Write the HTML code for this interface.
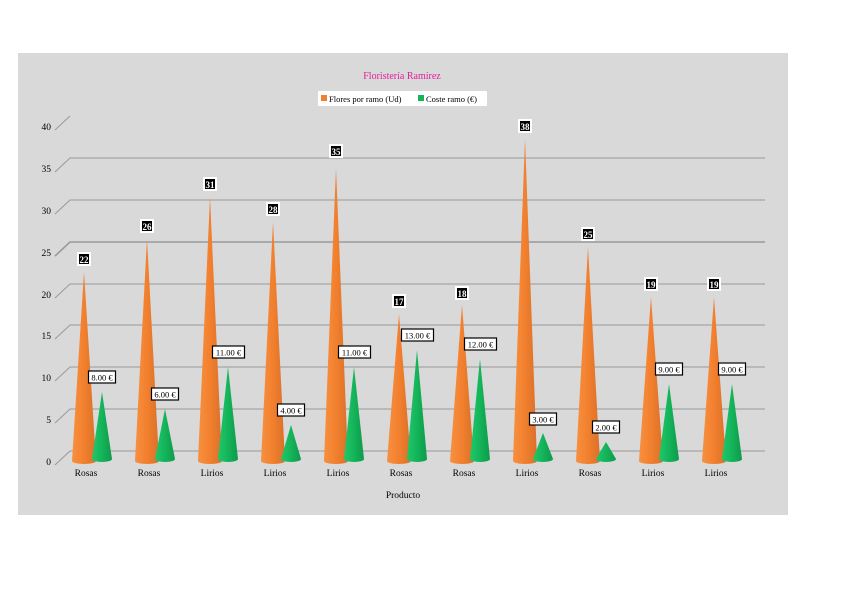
<!DOCTYPE html>
<html><head><meta charset="utf-8"><style>
html,body{margin:0;padding:0;background:#fff;width:848px;height:599px;overflow:hidden}
svg text{font-family:"Liberation Serif",serif}
</style></head><body>
<svg width="848" height="599" viewBox="0 0 848 599" xmlns="http://www.w3.org/2000/svg">
<defs>
<linearGradient id="og" x1="0" x2="1" y1="0" y2="0"><stop offset="0" stop-color="#f79040"/><stop offset="0.5" stop-color="#f2802e"/><stop offset="1" stop-color="#d8702a"/></linearGradient>
<linearGradient id="gg" x1="0" x2="1" y1="0" y2="0"><stop offset="0" stop-color="#1fc86a"/><stop offset="0.5" stop-color="#14b45a"/><stop offset="1" stop-color="#0e9a4a"/></linearGradient>
<g id="lb"></g>
</defs>
<rect x="18" y="53" width="770" height="462" fill="#d9d9d9"/>
<text x="402" y="79" font-size="10" fill="#e0209a" text-anchor="middle">Floristería Ramírez</text>
<rect x="318" y="91" width="169" height="15" fill="#fff"/>
<rect x="321" y="95" width="6" height="6" fill="#f2802e"/>
<text x="329" y="102" font-size="8.5" fill="#000">Flores por ramo (Ud)</text>
<rect x="418" y="95" width="6" height="6" fill="#14b45a"/>
<text x="426" y="102" font-size="8.5" fill="#000">Coste ramo (€)</text>
<g stroke="#999" stroke-width="1" fill="none">
<path d="M55,465 L70,451 H765"/>
<path d="M55,423 L70,409 H765"/>
<path d="M55,381 L70,367 H765"/>
<path d="M55,339 L70,325 H765"/>
<path d="M55,298 L70,284 H765"/>
<path d="M55,256 L70,242 H765" stroke-width="1.6"/>
<path d="M55,214 L70,200 H765"/>
<path d="M55,172 L70,158 H765"/>
<path d="M55,130 L70,116"/>
</g>
<g font-size="9.5" fill="#000" text-anchor="end">
<text x="51" y="465">0</text><text x="51" y="423">5</text><text x="51" y="381">10</text><text x="51" y="339">15</text><text x="51" y="298">20</text><text x="51" y="256">25</text><text x="51" y="214">30</text><text x="51" y="172">35</text><text x="51" y="130">40</text>
</g>
<g font-size="9.5" fill="#000" text-anchor="middle">
<text x="86" y="476">Rosas</text><text x="149" y="476">Rosas</text><text x="212" y="476">Lirios</text><text x="275" y="476">Lirios</text><text x="338" y="476">Lirios</text><text x="401" y="476">Rosas</text><text x="464" y="476">Rosas</text><text x="527" y="476">Lirios</text><text x="590" y="476">Rosas</text><text x="653" y="476">Lirios</text><text x="716" y="476">Lirios</text>
<text x="403" y="498">Producto</text>
</g>
<!-- cones -->
<g>
<g transform="translate(86,0)"><path d="M-14,461 L-2,272 L10,461 A12 3 0 0 1 -14,461Z" fill="url(#og)"/><path d="M6,459 L16,392 L26,459 A10 3 0 0 1 6,459Z" fill="url(#gg)"/></g>
<g transform="translate(149,0)"><path d="M-14,461 L-2,239 L10,461 A12 3 0 0 1 -14,461Z" fill="url(#og)"/><path d="M6,459 L16,409 L26,459 A10 3 0 0 1 6,459Z" fill="url(#gg)"/></g>
<g transform="translate(212,0)"><path d="M-14,461 L-2,197 L10,461 A12 3 0 0 1 -14,461Z" fill="url(#og)"/><path d="M6,459 L16,367 L26,459 A10 3 0 0 1 6,459Z" fill="url(#gg)"/></g>
<g transform="translate(275,0)"><path d="M-14,461 L-2,222 L10,461 A12 3 0 0 1 -14,461Z" fill="url(#og)"/><path d="M6,459 L16,425 L26,459 A10 3 0 0 1 6,459Z" fill="url(#gg)"/></g>
<g transform="translate(338,0)"><path d="M-14,461 L-2,168 L10,461 A12 3 0 0 1 -14,461Z" fill="url(#og)"/><path d="M6,459 L16,367 L26,459 A10 3 0 0 1 6,459Z" fill="url(#gg)"/></g>
<g transform="translate(401,0)"><path d="M-14,461 L-2,314 L10,461 A12 3 0 0 1 -14,461Z" fill="url(#og)"/><path d="M6,459 L16,350 L26,459 A10 3 0 0 1 6,459Z" fill="url(#gg)"/></g>
<g transform="translate(464,0)"><path d="M-14,461 L-2,305 L10,461 A12 3 0 0 1 -14,461Z" fill="url(#og)"/><path d="M6,459 L16,359 L26,459 A10 3 0 0 1 6,459Z" fill="url(#gg)"/></g>
<g transform="translate(527,0)"><path d="M-14,461 L-2,139 L10,461 A12 3 0 0 1 -14,461Z" fill="url(#og)"/><path d="M6,459 L16,433 L26,459 A10 3 0 0 1 6,459Z" fill="url(#gg)"/></g>
<g transform="translate(590,0)"><path d="M-14,461 L-2,247 L10,461 A12 3 0 0 1 -14,461Z" fill="url(#og)"/><path d="M6,459 L16,442 L26,459 A10 3 0 0 1 6,459Z" fill="url(#gg)"/></g>
<g transform="translate(653,0)"><path d="M-14,461 L-2,297 L10,461 A12 3 0 0 1 -14,461Z" fill="url(#og)"/><path d="M6,459 L16,384 L26,459 A10 3 0 0 1 6,459Z" fill="url(#gg)"/></g>
<g transform="translate(716,0)"><path d="M-14,461 L-2,297 L10,461 A12 3 0 0 1 -14,461Z" fill="url(#og)"/><path d="M6,459 L16,384 L26,459 A10 3 0 0 1 6,459Z" fill="url(#gg)"/></g>
</g>
<!-- orange labels -->
<g font-size="9" font-weight="bold" text-anchor="middle">
<g fill="#fff"><rect x="77" y="252" width="14" height="14"/><rect x="140" y="219" width="14" height="14"/><rect x="203" y="177" width="14" height="14"/><rect x="266" y="202" width="14" height="14"/><rect x="329" y="144" width="14" height="14"/><rect x="392" y="294" width="14" height="14"/><rect x="455" y="286" width="14" height="14"/><rect x="518" y="119" width="14" height="14"/><rect x="581" y="227" width="14" height="14"/><rect x="644" y="277" width="14" height="14"/><rect x="707" y="277" width="14" height="14"/></g>
<g fill="#000"><rect x="79" y="254" width="10" height="10"/><rect x="142" y="221" width="10" height="10"/><rect x="205" y="179" width="10" height="10"/><rect x="268" y="204" width="10" height="10"/><rect x="331" y="146" width="10" height="10"/><rect x="394" y="296" width="10" height="10"/><rect x="457" y="288" width="10" height="10"/><rect x="520" y="121" width="10" height="10"/><rect x="583" y="229" width="10" height="10"/><rect x="646" y="279" width="10" height="10"/><rect x="709" y="279" width="10" height="10"/></g>
<g fill="#fff"><text x="84" y="263">22</text><text x="147" y="230">26</text><text x="210" y="188">31</text><text x="273" y="213">28</text><text x="336" y="155">35</text><text x="399" y="305">17</text><text x="462" y="297">18</text><text x="525" y="130">38</text><text x="588" y="238">25</text><text x="651" y="288">19</text><text x="714" y="288">19</text></g>
</g>
<!-- green labels -->
<g font-size="8.5" text-anchor="middle" fill="#000">
<g fill="#fff" stroke="#000" stroke-width="1.2">
<rect x="88.5" y="371" width="27" height="12"/><rect x="151.5" y="388" width="27" height="12"/><rect x="212.5" y="346" width="32" height="12"/><rect x="277.5" y="404" width="27" height="12"/><rect x="338.5" y="346" width="32" height="12"/><rect x="401.5" y="329" width="32" height="12"/><rect x="464.5" y="338" width="32" height="12"/><rect x="529.5" y="413" width="27" height="12"/><rect x="592.5" y="421" width="27" height="12"/><rect x="655.5" y="363" width="27" height="12"/><rect x="718.5" y="363" width="27" height="12"/>
</g>
<text x="102" y="380.5">8.00 €</text><text x="165" y="397.5">6.00 €</text><text x="228.5" y="355.5">11.00 €</text><text x="291" y="413.5">4.00 €</text><text x="354.5" y="355.5">11.00 €</text><text x="417.5" y="338.5">13.00 €</text><text x="480.5" y="347.5">12.00 €</text><text x="543" y="422.5">3.00 €</text><text x="606" y="430.5">2.00 €</text><text x="669" y="372.5">9.00 €</text><text x="732" y="372.5">9.00 €</text>
</g>
</svg>
</body></html>
